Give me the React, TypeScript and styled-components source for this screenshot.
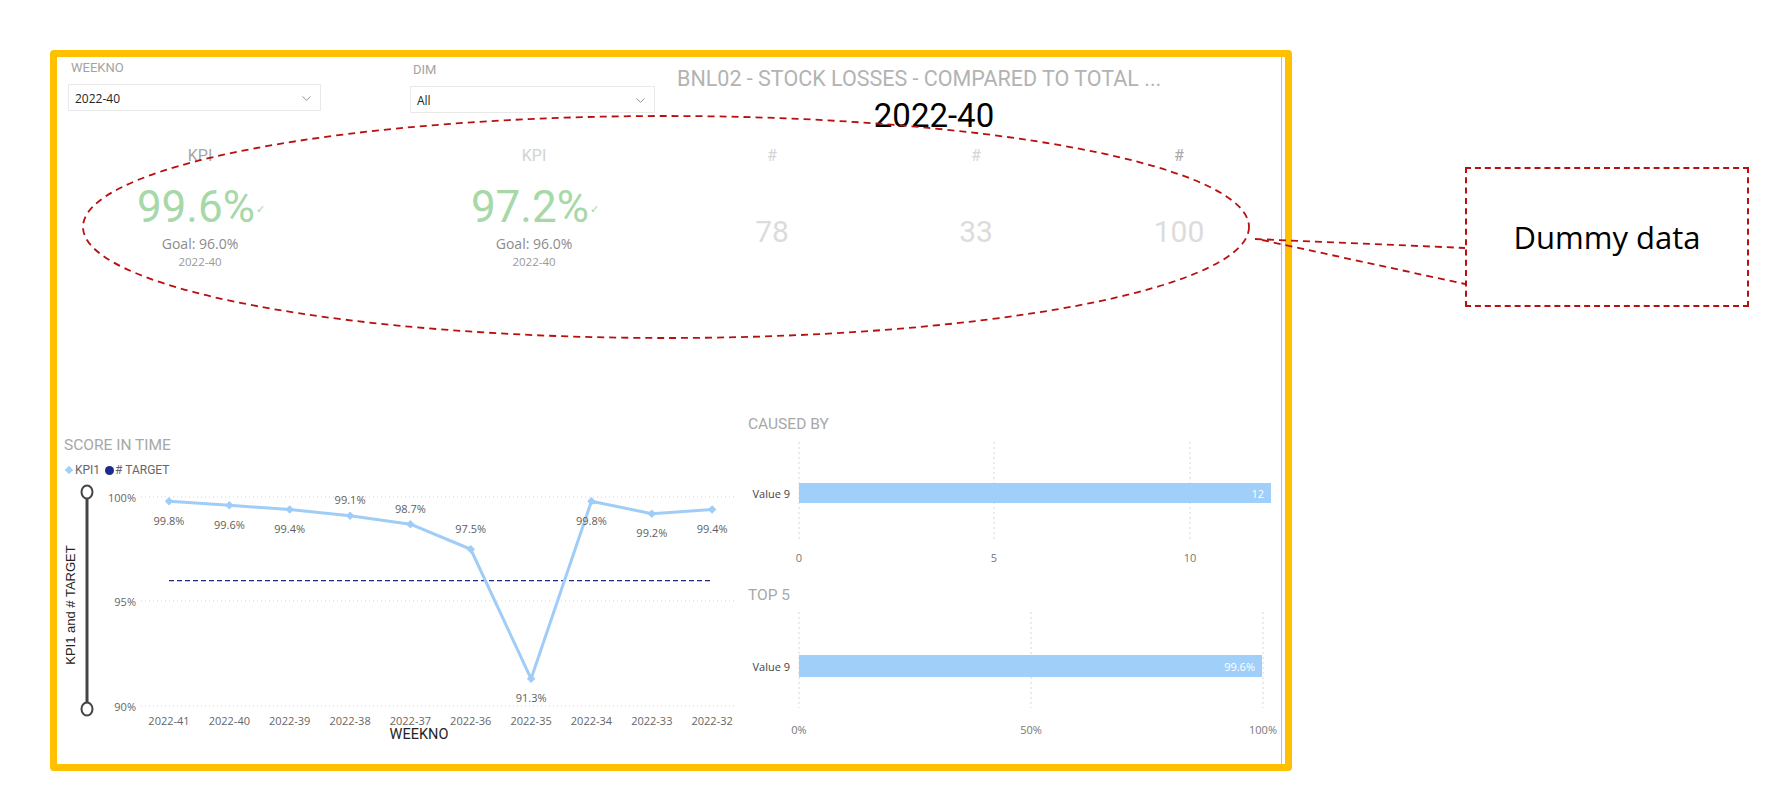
import React from "react";
import styled, { createGlobalStyle } from "styled-components";
import { ChevronDown } from "lucide-react";

const Global = createGlobalStyle`
  html, body { margin: 0; padding: 0; background: #ffffff; }
  body { font-family: "Open Sans", "Liberation Sans", sans-serif; }
  * { box-sizing: border-box; }
`;

const DIN = `"Roboto", "Liberation Sans", sans-serif`;
const SEGOE = `"Open Sans", "Liberation Sans", sans-serif`;

const Page = styled.div`
  position: relative;
  width: 1776px;
  height: 786px;
  display: flex;
  align-items: flex-start;
  padding: 50px 0 0 50px;
  overflow: hidden;
`;

const Frame = styled.div`
  flex-shrink: 0;
  width: 1242px;
  height: 721px;
  border: 7px solid #ffc000;
  border-radius: 4px;
  background: #ffffff;
`;

const Canvas = styled.div`
  width: 1225px;
  height: 100%;
  border-right: 1px solid #bdbdbd;
  display: flex;
  flex-direction: column;
`;

const Header = styled.div`
  height: 89px;
  display: flex;
  align-items: flex-start;
`;

const Slicer = styled.div<{ $w: number; $ml: number; $mt: number }>`
  width: ${(p) => p.$w}px;
  margin-left: ${(p) => p.$ml}px;
  margin-top: ${(p) => p.$mt}px;
  display: flex;
  flex-direction: column;
`;

const SlicerLabel = styled.div`
  margin-top: 3px;
  padding-left: 3px;
  font-family: ${DIN};
  font-size: 13px;
  line-height: 16px;
  color: #a3a3a3;
`;

const Dropdown = styled.div`
  margin-top: 8px;
  height: 27px;
  border: 1px solid #e9e9e9;
  display: flex;
  align-items: center;
  justify-content: space-between;
  padding: 2px 6px 0 6px;
  font-family: ${SEGOE};
  font-size: 12px;
  color: #252423;
`;

const TitleCard = styled.div`
  margin-left: 22px;
  width: 514px;
  display: flex;
  flex-direction: column;
`;

const ReportTitle = styled.div`
  margin-top: 9px;
  font-family: ${DIN};
  font-size: 21.5px;
  line-height: 26px;
  color: #b3b3b3;
  white-space: nowrap;
`;

const ReportValue = styled.div`
  margin-top: 6px;
  text-align: center;
  font-family: ${DIN};
  font-size: 33px;
  line-height: 36px;
  color: #000000;
`;

const KpiRow = styled.div`
  height: 138px;
  display: flex;
`;

const Card = styled.div<{ $w: number; $ml: number }>`
  width: ${(p) => p.$w}px;
  margin-left: ${(p) => p.$ml}px;
  display: flex;
  flex-direction: column;
`;

const CardTitle = styled.div<{ $c: string }>`
  text-align: center;
  font-family: ${DIN};
  font-size: 16px;
  line-height: 20px;
  color: ${(p) => p.$c};
`;

const CardBody = styled.div`
  flex: 1;
  display: flex;
  flex-direction: column;
  align-items: center;
  justify-content: center;
`;

const KpiValue = styled.div`
  font-family: ${DIN};
  font-size: 44px;
  line-height: 48px;
  color: #a6d8a8;
  display: flex;
  align-items: center;
  margin-left: 2px;
`;

const Check = styled.span`
  font-family: "DejaVu Sans", sans-serif;
  font-size: 11px;
  color: #a6d3a8;
  margin-left: 1px;
  margin-top: 6px;
`;

const Goal = styled.div`
  font-family: ${SEGOE};
  font-size: 14px;
  line-height: 20px;
  color: #8c8c8c;
`;

const Period = styled.div`
  font-family: ${SEGOE};
  font-size: 11.5px;
  line-height: 16px;
  color: #9a9a9a;
`;

const CountValue = styled.div`
  margin-top: 14px;
  font-family: ${DIN};
  font-size: 30px;
  line-height: 36px;
  color: #dcdcdc;
`;

const BottomRow = styled.div`
  margin-top: 130px;
  flex: 1;
  display: flex;
`;

const LeftPanel = styled.div`
  margin-left: 3px;
  width: 680px;
  padding-top: 21px;
  display: flex;
  flex-direction: column;
`;

const RightPanel = styled.div`
  margin-left: 5px;
  width: 535px;
  display: flex;
  flex-direction: column;
`;

const VisualTitle = styled.div<{ $mt?: number; $pl?: number }>`
  margin-top: ${(p) => p.$mt ?? 0}px;
  padding-left: ${(p) => p.$pl ?? 4}px;
  font-family: ${DIN};
  font-size: 15.5px;
  line-height: 20px;
  color: #a8a8a8;
`;

const Legend = styled.div`
  margin-top: 7px;
  padding-left: 4px;
  height: 16px;
  display: flex;
  align-items: center;
  font-family: ${DIN};
  font-size: 12px;
  color: #666666;
`;

const LegendItem = styled.span`
  display: inline-flex;
  align-items: center;
  margin-right: 5px;
`;

const Diamond = styled.span`
  width: 6px;
  height: 6px;
  background: #a0cffa;
  transform: rotate(45deg);
  margin: 0 3px 0 2px;
`;

const Dot = styled.span`
  width: 9px;
  height: 9px;
  border-radius: 50%;
  background: #1c2a8c;
  margin-right: 1px;
`;

const ChartSvg = styled.svg<{ $mt?: number }>`
  display: block;
  margin-top: ${(p) => p.$mt ?? 0}px;
  overflow: visible;
`;

const Callout = styled.div`
  flex-shrink: 0;
  margin-left: 173px;
  margin-top: 117px;
  width: 284px;
  height: 140px;
  border: 2px dashed #b80f0f;
  display: flex;
  align-items: center;
  justify-content: center;
  font-family: ${SEGOE};
  font-size: 31px;
  color: #000000;
`;

const Overlay = styled.svg`
  position: absolute;
  left: 0;
  top: 0;
  pointer-events: none;
`;

const weeks = [
  "2022-41", "2022-40", "2022-39", "2022-38", "2022-37",
  "2022-36", "2022-35", "2022-34", "2022-33", "2022-32",
];
const values = [99.8, 99.6, 99.4, 99.1, 98.7, 97.5, 91.3, 99.8, 99.2, 99.4];
const above = [false, false, false, true, true, true, false, false, false, false];

const px = (i: number) => 109 + i * 60.35;
const py = (v: number) => 17 + (100 - v) * 20.9;

const LINE = "#9fcdf7";
const TICK = "#666666";

function LineChart() {
  const pts = values.map((v, i) => `${px(i)},${py(v)}`).join(" ");
  return (
    <ChartSvg width={680} height={265} $mt={2}>
      {[17, 121, 226].map((y) => (
        <line key={y} x1={81} x2={674} y1={y} y2={y} stroke="#d4d4d4" strokeWidth={1} strokeDasharray="1 3" />
      ))}
      {[["100%", 17], ["95%", 121], ["90%", 226]].map(([t, y]) => (
        <text key={t as string} x={76} y={y as number} textAnchor="end" dominantBaseline="central"
          fontFamily={SEGOE} fontSize={11} fill={TICK}>{t}</text>
      ))}
      <line x1={27} x2={27} y1={18} y2={223} stroke="#444444" strokeWidth={3} />
      <ellipse cx={27} cy={12} rx={5.5} ry={6.5} fill="#ffffff" stroke="#444444" strokeWidth={2} />
      <ellipse cx={27} cy={229} rx={5.5} ry={6.5} fill="#ffffff" stroke="#444444" strokeWidth={2} />
      <text x={10} y={125} transform="rotate(-90 10 125)" textAnchor="middle" dominantBaseline="central"
        fontFamily={`"Liberation Sans", Arial, sans-serif`} fontSize={13} fill="#252423">KPI1 and # TARGET</text>
      <line x1={109} x2={653} y1={py(96)} y2={py(96)} stroke="#1c2a7a" strokeWidth={1.2} strokeDasharray="5 3" />
      <polyline points={pts} fill="none" stroke={LINE} strokeWidth={3} strokeLinejoin="round" />
      {values.map((v, i) => (
        <rect key={`m${i}`} x={px(i) - 3} y={py(v) - 3} width={6} height={6} fill={LINE}
          transform={`rotate(45 ${px(i)} ${py(v)})`} />
      ))}
      {values.map((v, i) => (
        <text key={`l${i}`} x={px(i)} y={py(v) + (above[i] ? (i === 5 ? -21 : -16) : 19)} textAnchor="middle"
          dominantBaseline="central" fontFamily={SEGOE} fontSize={11} fill="#605e5c">{v.toFixed(1)}%</text>
      ))}
      {weeks.map((w, i) => (
        <text key={w} x={px(i)} y={240} textAnchor="middle" dominantBaseline="central"
          fontFamily={SEGOE} fontSize={11} fill={TICK}>{w}</text>
      ))}
      <text x={359} y={254} textAnchor="middle" dominantBaseline="central" fontFamily={DIN}
        fontSize={14.5} fill="#252423">WEEKNO</text>
    </ChartSvg>
  );
}

type BarProps = {
  height: number;
  grid: { x: number; label: string }[];
  gridTop: number;
  gridBottom: number;
  barTop: number;
  barH: number;
  barEnd: number;
  barLabel: string;
  axisY: number;
};

function BarChart(p: BarProps) {
  const cy = p.barTop + p.barH / 2;
  return (
    <ChartSvg width={535} height={p.height}>
      {p.grid.map((g) => (
        <line key={g.label} x1={g.x} x2={g.x} y1={p.gridTop} y2={p.gridBottom} stroke="#d8d8d8"
          strokeWidth={1} strokeDasharray="2 3" />
      ))}
      <rect x={54} y={p.barTop} width={p.barEnd - 54} height={p.barH} fill="#a0cffa" />
      <text x={p.barEnd - 7} y={cy} textAnchor="end" dominantBaseline="central" fontFamily={SEGOE}
        fontSize={11} fill="#ffffff">{p.barLabel}</text>
      <text x={45} y={cy} textAnchor="end" dominantBaseline="central" fontFamily={SEGOE}
        fontSize={11} fill="#444444">Value 9</text>
      {p.grid.map((g) => (
        <text key={`t${g.label}`} x={g.x} y={p.axisY} textAnchor="middle" dominantBaseline="central"
          fontFamily={SEGOE} fontSize={11} fill="#777777">{g.label}</text>
      ))}
    </ChartSvg>
  );
}

export default function App() {
  return (
    <>
      <Global />
      <Page>
        <Frame>
          <Canvas>
            <Header>
              <Slicer $w={253} $ml={11} $mt={0}>
                <SlicerLabel>WEEKNO</SlicerLabel>
                <Dropdown>
                  <span>2022-40</span>
                  <ChevronDown size={15} strokeWidth={1} color="#555" />
                </Dropdown>
              </Slicer>
              <Slicer $w={245} $ml={89} $mt={2}>
                <SlicerLabel>DIM</SlicerLabel>
                <Dropdown>
                  <span>All</span>
                  <ChevronDown size={15} strokeWidth={1} color="#555" />
                </Dropdown>
              </Slicer>
              <TitleCard>
                <ReportTitle>BNL02 - STOCK LOSSES - COMPARED TO TOTAL ...</ReportTitle>
                <ReportValue>2022-40</ReportValue>
              </TitleCard>
            </Header>

            <KpiRow>
              <Card $w={264} $ml={11}>
                <CardTitle $c="#a6a6a6">KPI</CardTitle>
                <CardBody>
                  <KpiValue>99.6%<Check>✓</Check></KpiValue>
                  <Goal>Goal: 96.0%</Goal>
                  <Period>2022-40</Period>
                </CardBody>
              </Card>
              <Card $w={264} $ml={70}>
                <CardTitle $c="#d2d2d2">KPI</CardTitle>
                <CardBody>
                  <KpiValue>97.2%<Check>✓</Check></KpiValue>
                  <Goal>Goal: 96.0%</Goal>
                  <Period>2022-40</Period>
                </CardBody>
              </Card>
              <Card $w={190} $ml={11}>
                <CardTitle $c="#d6d6d6">#</CardTitle>
                <CardBody>
                  <CountValue>78</CountValue>
                </CardBody>
              </Card>
              <Card $w={190} $ml={14}>
                <CardTitle $c="#d6d6d6">#</CardTitle>
                <CardBody>
                  <CountValue>33</CountValue>
                </CardBody>
              </Card>
              <Card $w={190} $ml={13}>
                <CardTitle $c="#a9a9a9">#</CardTitle>
                <CardBody>
                  <CountValue>100</CountValue>
                </CardBody>
              </Card>
            </KpiRow>

            <BottomRow>
              <LeftPanel>
                <VisualTitle>SCORE IN TIME</VisualTitle>
                <Legend>
                  <LegendItem><Diamond />KPI1</LegendItem>
                  <LegendItem><Dot /># TARGET</LegendItem>
                </Legend>
                <LineChart />
              </LeftPanel>
              <RightPanel>
                <VisualTitle $pl={3}>CAUSED BY</VisualTitle>
                <BarChart
                  height={136}
                  grid={[{ x: 54, label: "0" }, { x: 249, label: "5" }, { x: 445, label: "10" }]}
                  gridTop={8}
                  gridBottom={107}
                  barTop={49}
                  barH={20}
                  barEnd={526}
                  barLabel="12"
                  axisY={123}
                />
                <VisualTitle $pl={3} $mt={15}>TOP 5</VisualTitle>
                <BarChart
                  height={140}
                  grid={[{ x: 54, label: "0%" }, { x: 286, label: "50%" }, { x: 518, label: "100%" }]}
                  gridTop={7}
                  gridBottom={103}
                  barTop={50}
                  barH={22}
                  barEnd={517}
                  barLabel="99.6%"
                  axisY={124}
                />
              </RightPanel>
            </BottomRow>
          </Canvas>
        </Frame>
        <Callout>Dummy data</Callout>
        <Overlay width={1776} height={786}>
          <ellipse cx={666} cy={227} rx={583} ry={111} fill="none" stroke="#b80f0f" strokeWidth={1.8}
            strokeDasharray="7 5" />
          <line x1={1255} y1={239} x2={1465} y2={248} stroke="#b80f0f" strokeWidth={1.8} strokeDasharray="7 5" />
          <line x1={1262} y1={240} x2={1465} y2={284} stroke="#b80f0f" strokeWidth={1.8} strokeDasharray="7 5" />
        </Overlay>
      </Page>
    </>
  );
}
